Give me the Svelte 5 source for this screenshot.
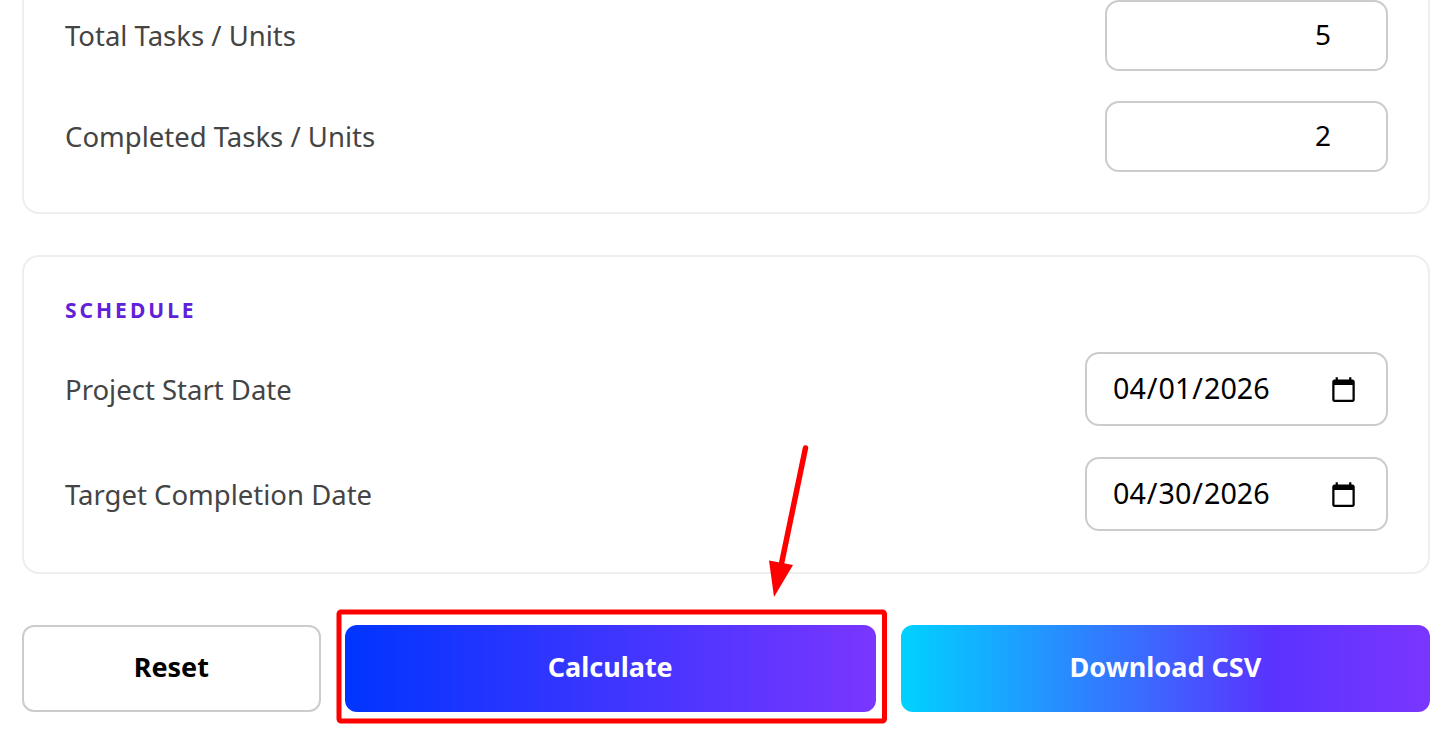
<script>
	let total = $state(5);
	let completed = $state(2);
	let startDate = $state('2026-04-01');
	let targetDate = $state('2026-04-30');
</script>

<main class="page">
	<section class="card card-cut">
		<div class="row">
			<label for="total">Total Tasks / Units</label>
			<input id="total" class="num" type="number" bind:value={total} />
		</div>
		<div class="row">
			<label for="completed">Completed Tasks / Units</label>
			<input id="completed" class="num" type="number" bind:value={completed} />
		</div>
	</section>

	<section class="card card-schedule">
		<h2>Schedule</h2>
		<div class="row date-row">
			<label for="start">Project Start Date</label>
			<input id="start" class="date" type="date" bind:value={startDate} />
		</div>
		<div class="row date-row">
			<label for="target">Target Completion Date</label>
			<input id="target" class="date" type="date" bind:value={targetDate} />
		</div>
	</section>

	<div class="actions">
		<button class="btn reset">Reset</button>
		<button class="btn calc">Calculate</button>
		<button class="btn csv">Download CSV</button>
	</div>

	<!-- annotation drawn over the screenshot -->
	<svg class="markup" viewBox="0 0 1450 732" width="1450" height="732" aria-hidden="true">
		<rect x="339" y="612" width="545.5" height="109" rx="2" fill="none" stroke="#ff0000" stroke-width="5" />
		<line x1="805.5" y1="448" x2="781" y2="566" stroke="#ff0000" stroke-width="5.5" stroke-linecap="round" />
		<polygon points="769,560.5 793,565 774,597" fill="#ff0000" />
	</svg>
</main>

<style>
	:global(body) {
		margin: 0;
		background: #fff;
	}

	.page {
		position: relative;
		height: 732px;
		overflow: hidden;
		box-sizing: border-box;
		padding: 0 20px 0 22px;
		font-family: "Noto Sans", "Open Sans", sans-serif;
	}

	.card {
		box-sizing: border-box;
		border: 2px solid #eeeeee;
		border-radius: 17px;
		padding: 0 41px;
	}

	.card-cut {
		height: 214px;
		border-top: 0;
		border-top-left-radius: 0;
		border-top-right-radius: 0;
	}

	.card-cut .row {
		margin-bottom: 30px;
	}

	.card-schedule {
		height: 319px;
		margin-top: 41px;
		padding-top: 40px;
	}

	h2 {
		margin: 0 0 29px;
		font-size: 21px;
		line-height: 26px;
		font-weight: 700;
		letter-spacing: 3px;
		text-transform: uppercase;
		color: #5f22d9;
	}

	.row {
		display: flex;
		align-items: center;
		justify-content: space-between;
		height: 71px;
	}

	.date-row {
		height: 74px;
		margin-bottom: 31px;
	}

	label {
		font-size: 27.5px;
		color: #444;
	}

	input {
		box-sizing: border-box;
		border: 2px solid #cccccc;
		border-radius: 14px;
		background: #fff;
		color: #000;
		font-family: inherit;
		outline: none;
	}

	.num {
		width: 283px;
		height: 71px;
		margin-right: -1px;
		padding: 0 40px 4px 20px;
		font-size: 28px;
		text-align: right;
		appearance: textfield;
	}

	.date {
		width: 303px;
		height: 74px;
		margin-right: -1px;
		padding: 0 26px 3px 25px;
		font-size: 28.7px;
	}

	.date::-webkit-calendar-picker-indicator {
		position: relative;
		top: 1.5px;
		width: 27px;
		height: 27px;
		padding: 0;
		margin: 0 3px 0 0;
		background-size: 27px 27px;
	}

	.actions {
		display: flex;
		gap: 24px;
		margin-top: 51px;
	}

	.btn {
		box-sizing: border-box;
		height: 87px;
		padding-bottom: 6px;
		border-radius: 12px;
		border: 0;
		font-family: inherit;
		font-size: 27px;
		font-weight: 700;
		color: #fff;
	}

	.reset {
		width: 299px;
		background: #fff;
		border: 2px solid #cccccc;
		color: #000;
	}

	.calc {
		width: 532px;
		background: linear-gradient(90deg, #0035ff, #7a36ff);
	}

	.csv {
		width: 530px;
		margin-left: 1px;
		background: linear-gradient(90deg, #00d2ff, #5a33ff 70%, #7a36ff);
	}

	.markup {
		position: absolute;
		left: 0;
		top: 0;
		pointer-events: none;
	}
</style>
